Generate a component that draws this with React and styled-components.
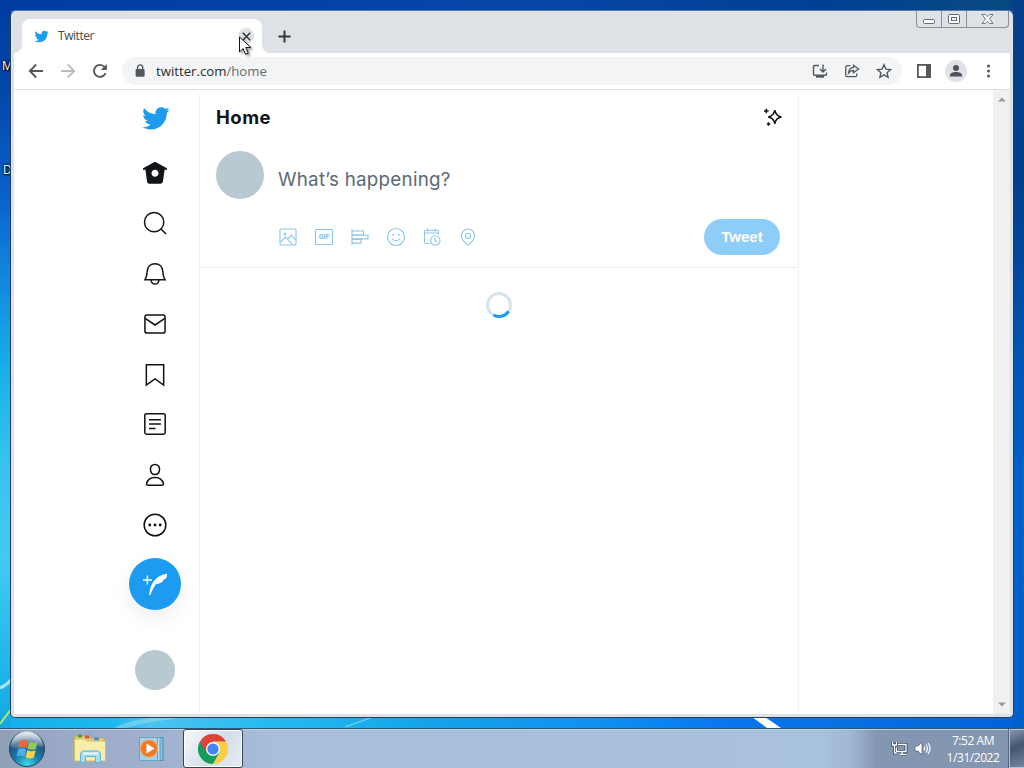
import React from 'react';
import styled, { createGlobalStyle, css } from 'styled-components';

const GlobalStyle = createGlobalStyle`
  * {
    box-sizing: border-box;
  }

  body {
    margin: 0;
    overflow: hidden;
  }

  button {
    padding: 0;
    border: 0;
    background: none;
    font: inherit;
  }

  svg {
    display: block;
    flex: none;
  }
`;

const uiFont = css`
  font-family: 'Open Sans', 'Noto Sans', sans-serif;
`;

/* Desktop */

const StyledDesktop = styled.div`
  position: relative;
  display: flex;
  flex-direction: column;
  justify-content: flex-end;
  width: 1024px;
  height: 768px;
  overflow: hidden;
  background:
    linear-gradient(
        180deg,
        #003ba0 0,
        #0449ae 100px,
        #0a63ce 200px,
        #1288df 280px,
        #18b0ea 370px,
        #35c3ee 460px,
        #3fcbf3 560px,
        #20b4ea 670px,
        #12a8e2 728px
      )
      0 0 / 11px 728px no-repeat,
    linear-gradient(180deg, #034088 0, #003e8a 180px, #0252ae 330px, #0060c8 480px, #0062c8 728px)
      1013px 0 / 11px 728px no-repeat,
    linear-gradient(90deg, #003ca2, #0647a8 50%, #023f94 80%, #084a80 98%, #034088) 0 0 / 1024px 11px
      no-repeat,
    linear-gradient(
      90deg,
      #12b0ea 0,
      #1cb7f0 110px,
      #4cc3f0 150px,
      #24bbf0 270px,
      #14a3ea 430px,
      #0f90f2 600px,
      #0877f0 720px,
      #0a70e4 840px,
      #0062d8 1024px
    );
`;

const StyledStreaks = styled.svg`
  position: absolute;
  left: 0;
  bottom: 40px;
`;

const StyledShortcut = styled.span`
  ${uiFont}
  position: absolute;
  left: ${({ $left }) => $left}px;
  top: ${({ $top }) => $top}px;
  color: #fff;
  font-size: 12px;
  line-height: 16px;
  text-shadow: 1px 1px 2px #000, 0 0 2px #000, 0 0 3px #000;
`;

/* Browser window */

const StyledWindow = styled.div`
  position: absolute;
  left: 10px;
  top: 10px;
  display: flex;
  flex-direction: column;
  width: 1004px;
  height: 708px;
  padding: 0 3px 3px;
  border: 1px solid #29405c;
  border-top-color: #5d7ba6;
  border-radius: 6px 6px 5px 5px;
  background: #dee1e6;
`;

const StyledTabStrip = styled.div`
  ${uiFont}
  display: flex;
  align-items: flex-end;
  height: 42px;
`;

const StyledTab = styled.div`
  position: relative;
  display: flex;
  align-items: center;
  width: 240px;
  height: 34px;
  margin-left: 8px;
  padding: 0 8px 0 12px;
  border-radius: 8px 8px 0 0;
  background: #fff;
  color: #45494d;
  font-size: 12px;
  letter-spacing: -0.45px;

  &:before,
  &:after {
    content: '';
    position: absolute;
    bottom: 0;
    width: 8px;
    height: 8px;
  }

  &:before {
    left: -8px;
    background: radial-gradient(circle at 0 0, transparent 7.5px, #fff 8px);
  }

  &:after {
    right: -8px;
    background: radial-gradient(circle at 100% 0, transparent 7.5px, #fff 8px);
  }

  span {
    flex: 1;
    margin-left: 9px;
    padding-bottom: 1px;
  }
`;

const StyledTabClose = styled.button`
  display: grid;
  place-items: center;
  width: 16px;
  height: 16px;
  border-radius: 50%;
  background: #dfe1e4;
`;

const StyledNewTab = styled.button`
  align-self: flex-end;
  margin: 0 auto 10px 16px;
`;

const StyledCaptionButtons = styled.div`
  display: flex;
  align-self: flex-start;
  height: 17px;
  margin-right: 1px;
  border: 1px solid #8a8f98;
  border-top: 0;
  border-radius: 0 0 4px 4px;
`;

const StyledCaptionButton = styled.button`
  display: grid;
  place-items: center;
  width: ${({ $width }) => $width}px;

  & + & {
    border-left: 1px solid #8a8f98;
  }
`;

const StyledToolbar = styled.div`
  ${uiFont}
  display: flex;
  align-items: center;
  height: 37px;
  padding: 0 12px 0 14px;
  border-bottom: 1px solid #dcdee1;
  background: #fff;
`;

const StyledNavButtons = styled.div`
  display: flex;
  gap: 16px;
`;

const StyledAddressBar = styled.div`
  display: flex;
  flex: 1;
  align-items: center;
  height: 28px;
  margin: 0 14px;
  padding: 0 10px;
  border-radius: 14px;
  background: #f3f4f5;
  color: #686c70;
  font-size: 13.2px;

  p {
    flex: 1;
    margin: 0 0 0 8px;
  }

  b {
    color: #2b2d30;
    font-weight: 400;
  }
`;

const StyledAddressActions = styled.div`
  display: flex;
  gap: 16px;
`;

const StyledToolbarActions = styled.div`
  display: flex;
  align-items: center;
  gap: 13px;
`;

const StyledProfile = styled.div`
  display: grid;
  place-items: center;
  width: 22px;
  height: 22px;
  border-radius: 50%;
  background: #dee1e6;
`;

const StyledCursor = styled.svg`
  position: absolute;
  left: 238px;
  top: 36px;
  filter: drop-shadow(2px 2px 1px rgba(0, 0, 0, 0.35));
`;

/* Twitter page */

const StyledPage = styled.div`
  display: flex;
  flex: 1;
  min-height: 0;
  background: #fff;
  font-family: Inter, 'Liberation Sans', sans-serif;
`;

const StyledSidebar = styled.header`
  display: flex;
  flex-direction: column;
  align-items: center;
  width: 88px;
  margin-left: 97px;
  padding-top: 13.5px;
`;

const StyledNav = styled.nav`
  display: flex;
  flex-direction: column;
  gap: 24.3px;
  margin-top: 27.5px;
`;

const StyledCompose = styled.button`
  display: grid;
  place-items: center;
  flex: none;
  width: 52px;
  height: 52px;
  margin-top: 20px;
  border-radius: 50%;
  background: #1d9bf0;
  box-shadow: 0 8px 20px rgba(0, 0, 0, 0.07);
`;

const StyledAvatar = styled.div`
  flex: none;
  width: ${({ $size }) => $size}px;
  height: ${({ $size }) => $size}px;
  border-radius: 50%;
  background: #b9c9d1;
`;

const StyledAccount = styled(StyledAvatar)`
  margin-top: 40px;
`;

const StyledTimeline = styled.main`
  width: 600px;
  margin-top: 4px;
  border: solid #eff1f3;
  border-width: 0 1px;
`;

const StyledTitleBar = styled.div`
  display: flex;
  align-items: center;
  justify-content: space-between;
  height: 47px;
  padding: 0 15px 2px 16px;

  h1 {
    margin: 0;
    color: #0f1419;
    font-size: 18.5px;
    font-weight: 700;
    letter-spacing: 0.5px;
  }
`;

const StyledComposer = styled.div`
  display: flex;
  gap: 14px;
  height: 127px;
  padding: 10px 18px 0 16px;
  border-bottom: 1px solid #eceff1;
`;

const StyledComposerBody = styled.div`
  flex: 1;
`;

const StyledPlaceholder = styled.div`
  height: 68px;
  padding-top: 16px;
  color: #5b6a75;
  font-size: 18.8px;
  line-height: 25px;
  letter-spacing: 0.25px;
`;

const StyledComposerTools = styled.div`
  display: flex;
  align-items: center;
  justify-content: space-between;
`;

const StyledAttachments = styled.div`
  display: flex;
  gap: 16px;

  text {
    fill: #85c3ea;
    stroke: none;
    font: 800 6.5px Inter, sans-serif;
  }
`;

const StyledTweet = styled.button`
  width: 76px;
  height: 36px;
  padding-bottom: 2px;
  border-radius: 18px;
  background: #8ecdf8;
  color: #fff;
  font-family: 'Liberation Sans', sans-serif;
  font-size: 15px;
  font-weight: 700;
`;

const StyledSpinner = styled.svg`
  margin: 24px auto 0;
`;

const StyledScrollbar = styled.div`
  display: flex;
  flex-direction: column;
  align-items: center;
  justify-content: space-between;
  width: 17px;
  margin-left: auto;
  padding: 7px 0;
  background: #f0f0f0;
`;

/* Taskbar */

const StyledTaskbar = styled.footer`
  ${uiFont}
  position: relative;
  display: flex;
  align-items: stretch;
  height: 40px;
  border-top: 1px solid #2d5878;
  background: linear-gradient(
    90deg,
    #8fa0b5 0,
    #9aa9c6 60px,
    #a2b3cf 180px,
    #a8bed9 280px,
    #a8c1de 820px,
    #a0b8d5 850px,
    #8396b2 876px,
    #8496af 1024px
  );
  box-shadow: inset 0 1px #b9cfe5;
`;

const StyledStart = styled.button`
  width: 54px;
  padding-left: 8px;
`;

const StyledTasks = styled.div`
  display: flex;
  flex: 1;
  margin-left: 5px;
`;

const StyledTask = styled.button`
  display: grid;
  place-items: center;
  width: ${({ $active }) => ($active ? 60 : 62)}px;

  ${({ $active }) =>
    $active &&
    css`
      border: 1px solid #33445c;
      border-radius: 3px;
      background: linear-gradient(125deg, #f5f8fb, #d5dee8 55%, #e4ebf2);
      box-shadow: inset 0 0 0 1px #fff;
    `}
`;

const StyledTray = styled.div`
  display: flex;
  align-items: center;
  gap: 6px;
`;

const StyledClock = styled.div`
  width: 60px;
  margin: 1px 6px 0;
  color: #fff;
  font-size: 12px;
  line-height: 17px;
  letter-spacing: -0.45px;
  text-align: center;
  white-space: nowrap;
`;

const StyledShowDesktop = styled.button`
  width: 15px;
  border: 1px solid #b4c4d6;
  border-right: 0;
  background: linear-gradient(160deg, #8596ac, #42566f 45%, #72869e);
  box-shadow: -1px 0 #54657c;
`;

const Bird = ({ size }) => (
  <svg width={size} height={size} viewBox="0 0 24 24" fill="#1d9bf0">
    <path d="M23.643 4.937c-.835.37-1.732.62-2.675.733.962-.576 1.7-1.49 2.048-2.578-.9.534-1.897.922-2.958 1.13-.85-.904-2.06-1.47-3.4-1.47-2.572 0-4.658 2.086-4.658 4.66 0 .364.042.718.12 1.06-3.873-.195-7.304-2.05-9.602-4.868-.4.69-.63 1.49-.63 2.342 0 1.616.823 3.043 2.072 3.878-.764-.025-1.482-.234-2.11-.583v.06c0 2.257 1.605 4.14 3.737 4.568-.392.106-.803.162-1.227.162-.3 0-.593-.028-.877-.082.593 1.85 2.313 3.198 4.352 3.234-1.595 1.25-3.604 1.995-5.786 1.995-.376 0-.747-.022-1.112-.065 2.062 1.323 4.51 2.093 7.14 2.093 8.57 0 13.255-7.098 13.255-13.254 0-.2-.005-.402-.014-.602.91-.658 1.7-1.477 2.323-2.41z" />
  </svg>
);

const Icon = ({ size = 16, box = 16, color = '#54585d', weight = 1.6, children }) => (
  <svg
    width={size}
    height={size}
    viewBox={`0 0 ${box} ${box}`}
    fill="none"
    stroke={color}
    strokeWidth={weight}
  >
    {children}
  </svg>
);

const navItems = [
  {
    name: 'Home',
    shape: (
      <path
        fill="#0f1419"
        stroke="none"
        fillRule="evenodd"
        d="M22.58 7.35L12.475 1.897c-.297-.16-.654-.16-.95 0L1.425 7.35c-.486.264-.667.87-.405 1.356.18.335.525.525.88.525.16 0 .324-.038.475-.12l.734-.396 1.59 11.25c.216 1.214 1.31 2.062 2.66 2.062h9.282c1.35 0 2.444-.848 2.662-2.088l1.588-11.225.737.398c.485.263 1.092.082 1.354-.404.263-.486.08-1.093-.404-1.355zM12 15.435c-1.795 0-3.25-1.455-3.25-3.25s1.455-3.25 3.25-3.25 3.25 1.455 3.25 3.25-1.455 3.25-3.25 3.25z"
      />
    ),
  },
  {
    name: 'Explore',
    shape: (
      <>
        <circle cx="11.2" cy="11.2" r="8.9" />
        <path d="M17.5 17.5l4.7 4.7" />
      </>
    ),
  },
  {
    name: 'Notifications',
    shape: (
      <>
        <path d="M2.8 17.3h18.4c-1.3-2-1.8-4-2-7.6C19 5.4 16 2.6 12 2.6S5 5.4 4.8 9.7c-.2 3.6-.7 5.6-2 7.6z" />
        <path d="M8.4 17.5c.2 2.5 1.6 3.8 3.6 3.8s3.4-1.3 3.6-3.8" />
      </>
    ),
  },
  {
    name: 'Messages',
    shape: (
      <>
        <rect x="2.7" y="3.6" width="18.6" height="16.8" rx="2" />
        <path d="M2.9 6.7L12 12.9l9.1-6.2" />
      </>
    ),
  },
  { name: 'Bookmarks', shape: <path d="M4 3.4h16v18.8l-8-5.6-8 5.6z" /> },
  {
    name: 'Lists',
    shape: (
      <>
        <rect x="2.6" y="2.6" width="18.8" height="18.8" rx="1.6" />
        <path d="M6.5 8h11M6.5 12h11M6.5 16.2h6" />
      </>
    ),
  },
  {
    name: 'Profile',
    shape: (
      <>
        <path d="M12 2.2c2.6 0 4.3 1.8 4.2 4.5-.1 2.8-1.7 4.9-4.2 4.9S7.9 9.5 7.8 6.7c-.1-2.7 1.6-4.5 4.2-4.5z" />
        <path d="M5.5 21.5h13c1 0 1.5-.7 1.3-1.6-.8-3.6-3.8-5.7-7.8-5.7s-7 2.1-7.8 5.7c-.2.9.3 1.6 1.3 1.6z" />
      </>
    ),
  },
  {
    name: 'More',
    shape: (
      <>
        <circle cx="12" cy="12" r="10" />
        <path d="M7.2 12h.01M12 12h.01M16.8 12h.01" strokeWidth="2.7" strokeLinecap="round" />
      </>
    ),
  },
];

const attachments = [
  {
    name: 'Media',
    shape: (
      <>
        <rect x="2" y="2" width="16" height="16" rx="1" />
        <circle cx="6.8" cy="7" r=".8" />
        <path d="M2.5 15l5-5.2 5 5.7M9.8 12.2l3.6-4 4.2 4.8M12.3 14.9l1.8 2.2" />
      </>
    ),
  },
  {
    name: 'GIF',
    shape: (
      <>
        <rect x="1.5" y="2.5" width="17" height="15" rx="1" />
        <text x="10" y="12.4" textAnchor="middle">
          GIF
        </text>
      </>
    ),
  },
  {
    name: 'Poll',
    shape: <path d="M2 2v16M2 4h11.5v3.7H2M2 8.2h16v3.7H2M2 12.4h9v3.7H2" />,
  },
  {
    name: 'Emoji',
    shape: (
      <>
        <circle cx="10" cy="10" r="8.5" />
        <path d="M6 11.5c1.6 2.9 6.4 2.9 8 0" />
        <path d="M7.3 7.7h.01M12.7 7.7h.01" strokeWidth="2" strokeLinecap="round" />
      </>
    ),
  },
  {
    name: 'Schedule',
    shape: (
      <>
        <path d="M7.3 16.5H4c-1 0-1.5-.6-1.5-1.5V4.5c0-.8.5-1.3 1.3-1.3h11.4c.8 0 1.3.5 1.3 1.3v3.3M2.5 6h14M5.5 1.5v3M13.5 1.5v3" />
        <circle cx="13.3" cy="13.5" r="4.7" />
        <path d="M13 10.8v3l2.2 1" />
      </>
    ),
  },
  {
    name: 'Location',
    shape: (
      <>
        <path d="M10 18.3c3.8-3.2 6.6-6.1 6.6-9.6C16.6 5 13.6 2 10 2S3.4 5 3.4 8.7c0 3.5 2.8 6.4 6.6 9.6z" />
        <circle cx="10" cy="8.8" r="2.6" />
      </>
    ),
  },
];

const TabStrip = () => (
  <StyledTabStrip>
    <StyledTab>
      <Bird size={15} />
      <span>Twitter</span>
      <StyledTabClose>
        <Icon size={9} box={9} color="#33373b">
          <path d="M.8.8l7.4 7.4M8.2.8L.8 8.2" />
        </Icon>
      </StyledTabClose>
    </StyledTab>
    <StyledNewTab>
      <Icon size={13} box={13} color="#33373b" weight={2}>
        <path d="M6.5.5v12M.5 6.5h12" />
      </Icon>
    </StyledNewTab>
    <StyledCaptionButtons>
      <StyledCaptionButton $width={24}>
        <svg width="13" height="12" fill="#fff" stroke="#606a78">
          <rect x=".5" y="6.5" width="11" height="4" rx="1" />
        </svg>
      </StyledCaptionButton>
      <StyledCaptionButton $width={25}>
        <svg width="13" height="12" fill="#fff" stroke="#606a78">
          <rect x=".5" y="1.5" width="11" height="9" rx="1" />
          <rect x="3.5" y="4.5" width="5" height="3" />
        </svg>
      </StyledCaptionButton>
      <StyledCaptionButton $width={42}>
        <svg width="13" height="12" fill="#fff" stroke="#606a78" strokeWidth=".9">
          <path d="M1 1.5h3.4l2.1 2.3 2.1-2.3H12L8.5 6l3.5 4.5H8.6L6.5 8.2l-2.1 2.3H1L4.5 6z" />
        </svg>
      </StyledCaptionButton>
    </StyledCaptionButtons>
  </StyledTabStrip>
);

const Toolbar = () => (
  <StyledToolbar>
    <StyledNavButtons>
      <Icon weight={1.8}>
        <path d="M15 8H2M8.2 1.5L1.8 8l6.4 6.5" />
      </Icon>
      <Icon weight={1.8} color="#b9bcc0">
        <path d="M1 8h13M7.8 1.5L14.2 8l-6.4 6.5" />
      </Icon>
      <Icon weight={1.9}>
        <path d="M13.6 10A6 6 0 1 1 12.6 4l1.3 1.5" />
        <path d="M14.8 1v6H8.8z" fill="#54585d" stroke="none" />
      </Icon>
    </StyledNavButtons>
    <StyledAddressBar>
      <svg width="16" height="16" fill="none" stroke="#54585d" strokeWidth="1.4">
        <rect x="3.6" y="6" width="9" height="7.8" rx="1" fill="#54585d" stroke="none" />
        <path d="M5.5 6.5V4.5a2.6 2.6 0 0 1 5.2 0v2" />
      </svg>
      <p>
        <b>twitter.com</b>/home
      </p>
      <StyledAddressActions>
        <Icon weight={1.4}>
          <path d="M7 2.5H2.5c-.7 0-1 .4-1 1v7.8c0 .6.4 1 1 1h11c.6 0 1-.4 1-1V9.5M11 1.5v7.2M8 6l3 3 3-3" />
          <path d="M4 13.7h8" strokeWidth="2" />
        </Icon>
        <Icon weight={1.3}>
          <path d="M6.5 2.7H3.2c-.9 0-1.5.6-1.5 1.5v8c0 .9.6 1.5 1.5 1.5h8.1c.9 0 1.5-.6 1.5-1.5v-1.7" />
          <path d="M9.5 2.3L14.6 6 9.5 9.8V7.5c-2.3 0-3.7.7-5 2.5.3-3.2 2-5.3 5-5.6z" />
        </Icon>
        <Icon weight={1.4}>
          <path d="M8 1.8l1.9 4.3 4.7.5-3.5 3.1 1 4.6L8 11.9l-4.1 2.4 1-4.6-3.5-3.1 4.7-.5z" />
        </Icon>
      </StyledAddressActions>
    </StyledAddressBar>
    <StyledToolbarActions>
      <Icon weight={1.8}>
        <rect x="1.9" y="1.9" width="12.2" height="12.2" />
        <rect x="10" y="2" width="4" height="12" fill="#54585d" stroke="none" />
      </Icon>
      <StyledProfile>
        <svg width="14" height="14" fill="#4c535b">
          <circle cx="7" cy="4" r="3" />
          <path d="M1 12.5v-1.3c0-2 3-3.2 6-3.2s6 1.2 6 3.2v1.3z" />
        </svg>
      </StyledProfile>
      <svg width="18" height="16" fill="#54585d">
        <circle cx="8.5" cy="3" r="1.5" />
        <circle cx="8.5" cy="8" r="1.5" />
        <circle cx="8.5" cy="13" r="1.5" />
      </svg>
    </StyledToolbarActions>
  </StyledToolbar>
);

const Sidebar = () => (
  <StyledSidebar>
    <Bird size={29} />
    <StyledNav>
      {navItems.map(({ name, shape }) => (
        <Icon key={name} size={26} box={24} color="#0f1419" weight={1.4}>
          {shape}
        </Icon>
      ))}
    </StyledNav>
    <StyledCompose>
      <svg width="26" height="26" fill="#fff">
        <path d="M7.2 24C7.8 14 13 4.2 25 2.8c.4 2.5-.5 4.300-2.400 5.600l-2.800.4 1.800.8c-1.500 2-3.700 3.100-6.600 3.300l-2-.3.900 1C11.700 16 10 19.500 8.500 24z" />
        <path d="M4.7 4.5h1.4v3.8H10v1.4H6.1v3.9H4.7V9.7H.9V8.300h3.800z" />
      </svg>
    </StyledCompose>
    <StyledAccount $size={40} />
  </StyledSidebar>
);

const Timeline = () => (
  <StyledTimeline>
    <StyledTitleBar>
      <h1>Home</h1>
      <Icon size={20} box={20} color="#0f1419" weight={1.5}>
        <path d="M11.8 3.2c.7 4.1 2.2 6.1 6.6 6.8-4.4.7-5.9 2.7-6.6 6.8-.7-4.1-2.2-6.1-6.6-6.8 4.4-.7 5.9-2.7 6.6-6.8z" />
        <path d="M3.3 1.7v4.6M1 4h4.6M5.500 15.300v3.400M3.800 17h3.400" />
      </Icon>
    </StyledTitleBar>
    <StyledComposer>
      <StyledAvatar $size={48} />
      <StyledComposerBody>
        <StyledPlaceholder>What’s happening?</StyledPlaceholder>
        <StyledComposerTools>
          <StyledAttachments>
            {attachments.map(({ name, shape }) => (
              <Icon key={name} size={20} box={20} color="#8ac6ea" weight={1.1}>
                {shape}
              </Icon>
            ))}
          </StyledAttachments>
          <StyledTweet>Tweet</StyledTweet>
        </StyledComposerTools>
      </StyledComposerBody>
    </StyledComposer>
    <StyledSpinner width="26" height="26" fill="none" strokeWidth="3">
      <circle cx="13" cy="13" r="11.5" stroke="#d5e5ee" />
      <path d="M22.6 19.3A11.5 11.5 0 0 1 7.4 23" stroke="#1d9bf0" />
    </StyledSpinner>
  </StyledTimeline>
);

const Scrollbar = () => (
  <StyledScrollbar>
    <svg width="8" height="5" fill="#96989b">
      <path d="M0 4.5L4 .5l4 4z" />
    </svg>
    <svg width="8" height="5" fill="#96989b">
      <path d="M0 .5l4 4 4-4z" />
    </svg>
  </StyledScrollbar>
);

const StartOrb = () => (
  <svg width="38" height="38" viewBox="0 0 38 38">
    <defs>
      <radialGradient id="orb" cx=".5" cy=".95" r=".9">
        <stop offset="0" stopColor="#42dcec" />
        <stop offset=".4" stopColor="#157fae" />
        <stop offset=".75" stopColor="#255481" />
        <stop offset="1" stopColor="#9ab4cc" />
      </radialGradient>
      <linearGradient id="gloss" x2="0" y2="1">
        <stop offset="0" stopColor="#fff" stopOpacity=".75" />
        <stop offset="1" stopColor="#fff" stopOpacity=".12" />
      </linearGradient>
    </defs>
    <circle cx="19" cy="19" r="17.5" fill="url(#orb)" stroke="#28455f" />
    <path d="M3 17a16 16 0 0 1 32 0c-9-3-20 4-32 0z" fill="url(#gloss)" />
    <g transform="translate(1.5 -.5)">
      <path d="M10.5 11.5c3-1.8 5.5-1.5 8 0l-1.6 7.2c-2.6-1.5-5-1.5-8 0z" fill="#ee6930" />
      <path d="M19.7 12.2c2.5 1.4 5 1.5 8.3 0l-1.7 7.2c-3 1.4-5.5 1.2-8.2-.2z" fill="#91c856" />
      <path d="M8.6 20c3-1.6 5.4-1.5 8 0L15 27c-2.6-1.5-5-1.5-8 0z" fill="#52aee6" />
      <path d="M17.8 20.6c2.5 1.5 5 1.6 8.2.2L24.3 28c-3.2 1.4-5.6 1.2-8.1-.2z" fill="#ffd14b" />
    </g>
  </svg>
);

const ExplorerIcon = () => (
  <svg width="34" height="32">
    <path d="M2 3h9l2 2h18v22H2z" fill="#e8d177" stroke="#c5a953" />
    <path d="M5 1.5h4v3H5z" fill="#43a047" />
    <path d="M12 2.5h4v3h-4z" fill="#d65744" />
    <path d="M21 4.5h5v3h-5z" fill="#4c88cf" />
    <path d="M1.5 6h10l2 2h19v20h-31z" fill="#f8edaa" stroke="#d4bc64" />
    <path
      d="M7.5 29.5V22c0-2 1-4 3-4h14c2 0 3 2 3 4v7.5h-5v-6h-10v6z"
      fill="#a9dcef"
      stroke="#5eb2d7"
    />
    <path d="M10 20.5h15" stroke="#e5f8ff" strokeWidth="2" />
  </svg>
);

const PlayerIcon = () => (
  <svg width="30" height="30">
    <path d="M9 3.5h17v23H9z" fill="#87c3df" stroke="#478dae" />
    <path d="M6 3.5h17v23H6z" fill="#b8def0" stroke="#5aa3c5" />
    <path d="M2.5 3.5h18v23h-18z" fill="#a4d2eb" stroke="#63a7ca" />
    <circle cx="12" cy="14.5" r="8.7" fill="#ed7b25" stroke="#f7b078" />
    <path d="M9.500 9.500v10l8-5z" fill="#fff" />
  </svg>
);

const ChromeIcon = () => (
  <svg width="30" height="30" viewBox="-15 -15 30 30">
    <path d="M0 0L-13-7.5A15 15 0 0 0 0 15l6.5-11.25z" fill="#129d58" />
    <path d="M0-7.5h13A15 15 0 0 1 0 15L6.5 3.75z" fill="#ffcd42" />
    <path d="M-13-7.5A15 15 0 0 1 13-7.5H0L-6.5 3.75z" fill="#db4437" />
    <circle r="7" fill="#f4f6fa" />
    <circle r="5.6" fill="#4285f4" />
  </svg>
);

const Taskbar = () => (
  <StyledTaskbar>
    <StyledStart>
      <StartOrb />
    </StyledStart>
    <StyledTasks>
      <StyledTask>
        <ExplorerIcon />
      </StyledTask>
      <StyledTask>
        <PlayerIcon />
      </StyledTask>
      <StyledTask $active>
        <ChromeIcon />
      </StyledTask>
    </StyledTasks>
    <StyledTray>
      <svg width="17" height="17" fill="none" stroke="#3c4b60" strokeWidth="3">
        <path d="M7 4.5h8v7H5.5v-4M9 14.5h6M11 12v3M1.5 2v3h4V2M3.5 5v8h2" />
        <path
          d="M7 4.5h8v7H5.5v-4M9 14.5h6M11 12v3M1.5 2v3h4V2M3.5 5v8h2"
          stroke="#fff"
          strokeWidth="1.3"
        />
      </svg>
      <svg width="17" height="17" fill="none" stroke="#fff" strokeWidth="1.2">
        <path d="M1 6h3l4-4v13l-4-4H1z" fill="#fff" stroke="#53647b" strokeWidth=".8" />
        <path d="M10 6.5c.8 1.3.8 2.7 0 4M12 4.5c1.8 2.5 1.8 5.5 0 8M14 3c2.6 3.5 2.6 7.5 0 11" />
      </svg>
      <StyledClock>
        7:52 AM
        <br />
        1/31/2022
      </StyledClock>
    </StyledTray>
    <StyledShowDesktop />
  </StyledTaskbar>
);

const App = () => (
  <>
    <GlobalStyle />
    <StyledDesktop>
      <StyledStreaks width="1024" height="60">
        <path d="M0 20q7-3 12-9" stroke="#a4e6fa" strokeWidth="3" fill="none" />
        <path d="M0 56L12 40" stroke="#b5e56b" strokeWidth="2" />
        <path d="M115 60q12-8 45-11h30q-40 4-64 11z" fill="#8ad9ee" opacity=".6" />
        <path d="M345 59l28-10" stroke="#8bdaf2" />
        <path d="M752 49h13l16 11h-14z" fill="#fff" />
      </StyledStreaks>
      <StyledShortcut $left={2} $top={58}>
        M
      </StyledShortcut>
      <StyledShortcut $left={3} $top={162}>
        D
      </StyledShortcut>
      <StyledWindow>
        <TabStrip />
        <Toolbar />
        <StyledPage>
          <Sidebar />
          <Timeline />
          <Scrollbar />
        </StyledPage>
      </StyledWindow>
      <StyledCursor width="14" height="21">
        <path
          d="M1.5 1v15l3.6-3.5 2.5 5.8 2.7-1.2-2.5-5.6h5z"
          fill="#fff"
          stroke="#111"
        />
      </StyledCursor>
      <Taskbar />
    </StyledDesktop>
  </>
);

export default App;
